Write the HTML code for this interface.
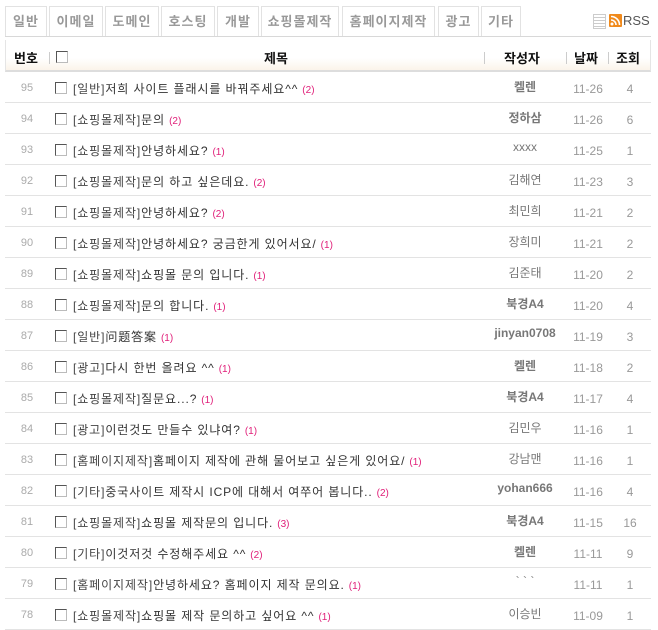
<!DOCTYPE html>
<html><head><meta charset="utf-8"><style>
body{margin:0;background:#fff;font-family:"Liberation Sans","Noto Sans CJK KR","NanumGothic",sans-serif;font-size:12px;width:658px;height:613px;overflow:hidden;position:relative}
.tab{position:absolute;top:6px;height:30px;border:1px solid #e2e2e2;border-bottom:none;color:#999;font-weight:bold;font-size:13px;line-height:30px;text-align:center;box-sizing:border-box;letter-spacing:1px}
.tl{position:absolute;left:5px;top:36px;width:646px;height:1px;background:#d8d8d8}
.hd{position:absolute;left:5px;top:40px;width:646px;height:32px;border-left:1px solid #e5e5e5;border-right:1px solid #e5e5e5;border-bottom:2px solid #ddd;box-sizing:border-box;background:linear-gradient(#fff 60%,#fbf4ea)}
.hd span{position:absolute;top:8px;font-weight:bold;font-size:13px;color:#111}
.sep{position:absolute;top:12px;width:1px;height:12px;background:#ccc}
.cb{position:absolute;width:10px;height:10px;border:1px solid #555;border-right-color:#bbb;border-bottom-color:#bbb;background:#fff}
.row{position:absolute;left:5px;width:646px;height:31px;border-bottom:1px solid #e3e3e3;box-sizing:border-box}
.n{position:absolute;left:0;width:44px;text-align:center;top:10px;color:#aaa;font-size:11px}
.t{position:absolute;left:68px;top:8px;color:#333;white-space:nowrap;letter-spacing:0.9px}
.t b{font-weight:normal;color:#444}
.c{color:#e0207a;font-size:10px;margin-left:4px;letter-spacing:0}
.w{position:absolute;left:478px;width:84px;text-align:center;top:6px;color:#777}
.w.b{font-weight:bold;color:#777;font-size:12px}
.d{position:absolute;left:559px;width:48px;text-align:center;top:10px;color:#999;font-size:12px}
.v{position:absolute;left:605px;width:40px;text-align:center;top:10px;color:#999}
</style></head><body>
<div class="tab" style="left:5px;width:42px">일반</div>
<div class="tab" style="left:49px;width:54px">이메일</div>
<div class="tab" style="left:105px;width:54px">도메인</div>
<div class="tab" style="left:161px;width:54px">호스팅</div>
<div class="tab" style="left:217px;width:42px">개발</div>
<div class="tab" style="left:261px;width:78px">쇼핑몰제작</div>
<div class="tab" style="left:342px;width:93px">홈페이지제작</div>
<div class="tab" style="left:438px;width:41px">광고</div>
<div class="tab" style="left:481px;width:40px">기타</div>
<div style="position:absolute;left:593px;top:14px;width:11px;height:13px;border:1px solid #ccc;background:repeating-linear-gradient(#fff 0 2px,#ccc 2px 3px)"></div>
<div style="position:absolute;left:609px;top:14px;width:13px;height:13px;background:#f08a1c;border-radius:1px"><svg width="13" height="13"><circle cx="3" cy="10" r="1.5" fill="#fff"/><path d="M2 6a5 5 0 0 1 5 5M2 2.5a8.5 8.5 0 0 1 8.5 8.5" stroke="#fff" stroke-width="1.6" fill="none"/></svg></div>
<div style="position:absolute;left:623px;top:13px;color:#555;font-size:13px">RSS</div>
<div class="tl"></div>
<div class="hd">
<span style="left:8px">번호</span><div class="sep" style="left:43px"></div>
<div class="cb" style="left:50px;top:11px"></div>
<span style="left:258px">제목</span>
<div class="sep" style="left:478px"></div>
<span style="left:498px">작성자</span>
<div class="sep" style="left:560px"></div>
<span style="left:568px">날짜</span>
<div class="sep" style="left:602px"></div>
<span style="left:610px">조회</span>
</div>
<div id="rows"></div>
<script>
var R=[
[95,"일반","저희 사이트 플래시를 바꿔주세요^^",2,"켈렌",1,"11-26",4],
[94,"쇼핑몰제작","문의",2,"정하삼",1,"11-26",6],
[93,"쇼핑몰제작","안녕하세요?",1,"xxxx",0,"11-25",1],
[92,"쇼핑몰제작","문의 하고 싶은데요.",2,"김해연",0,"11-23",3],
[91,"쇼핑몰제작","안녕하세요?",2,"최민희",0,"11-21",2],
[90,"쇼핑몰제작","안녕하세요? 궁금한게 있어서요/",1,"장희미",0,"11-21",2],
[89,"쇼핑몰제작","쇼핑몰 문의 입니다.",1,"김준태",0,"11-20",2],
[88,"쇼핑몰제작","문의 합니다.",1,"북경A4",1,"11-20",4],
[87,"일반","问题答案",1,"jinyan0708",1,"11-19",3],
[86,"광고","다시 한번 올려요 ^^",1,"켈렌",1,"11-18",2],
[85,"쇼핑몰제작","질문요...?",1,"북경A4",1,"11-17",4],
[84,"광고","이런것도 만들수 있냐여?",1,"김민우",0,"11-16",1],
[83,"홈페이지제작","홈페이지 제작에 관해 물어보고 싶은게 있어요/",1,"강남맨",0,"11-16",1],
[82,"기타","중국사이트 제작시 ICP에 대해서 여쭈어 봅니다..",2,"yohan666",1,"11-16",4],
[81,"쇼핑몰제작","쇼핑몰 제작문의 입니다.",3,"북경A4",1,"11-15",16],
[80,"기타","이것저것 수정해주세요 ^^",2,"켈렌",1,"11-11",9],
[79,"홈페이지제작","안녕하세요? 홈페이지 제작 문의요.",1,"` ` `",0,"11-11",1],
[78,"쇼핑몰제작","쇼핑몰 제작 문의하고 싶어요 ^^",1,"이승빈",0,"11-09",1]];
var h="";R.forEach(function(r,i){var y=72+i*31;
h+='<div class="row" style="top:'+y+'px"><div class="n">'+r[0]+'</div><div class="cb" style="left:50px;top:10px"></div><div class="t"><b>['+r[1]+']</b>'+r[2]+'<span class="c">('+r[3]+')</span></div><div class="w'+(r[5]?' b':'')+'">'+r[4]+'</div><div class="d">'+r[6]+'</div><div class="v">'+r[7]+'</div></div>';});
document.getElementById("rows").innerHTML=h;
</script>
</body></html>
